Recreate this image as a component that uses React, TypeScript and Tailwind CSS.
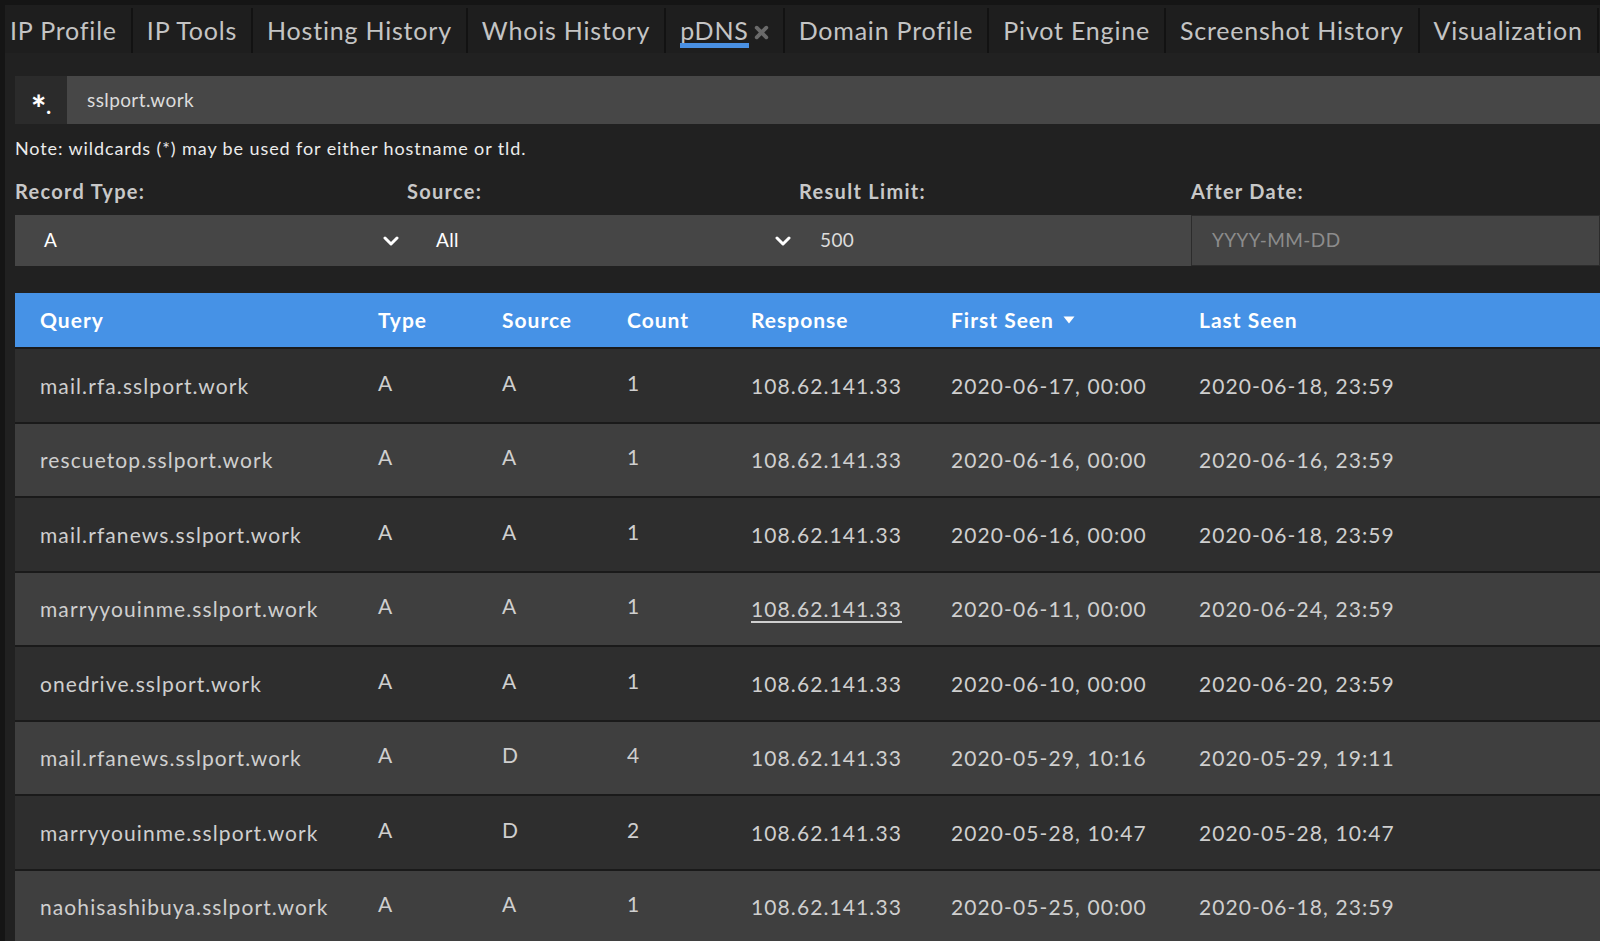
import React from "react";

const tabs = [
  "IP Profile",
  "IP Tools",
  "Hosting History",
  "Whois History",
  "pDNS",
  "Domain Profile",
  "Pivot Engine",
  "Screenshot History",
  "Visualization",
];

type Row = {
  query: string;
  type: string;
  source: string;
  count: string;
  response: string;
  first: string;
  last: string;
  link?: boolean;
};

const rows: Row[] = [
  { query: "mail.rfa.sslport.work", type: "A", source: "A", count: "1", response: "108.62.141.33", first: "2020-06-17, 00:00", last: "2020-06-18, 23:59" },
  { query: "rescuetop.sslport.work", type: "A", source: "A", count: "1", response: "108.62.141.33", first: "2020-06-16, 00:00", last: "2020-06-16, 23:59" },
  { query: "mail.rfanews.sslport.work", type: "A", source: "A", count: "1", response: "108.62.141.33", first: "2020-06-16, 00:00", last: "2020-06-18, 23:59" },
  { query: "marryyouinme.sslport.work", type: "A", source: "A", count: "1", response: "108.62.141.33", first: "2020-06-11, 00:00", last: "2020-06-24, 23:59", link: true },
  { query: "onedrive.sslport.work", type: "A", source: "A", count: "1", response: "108.62.141.33", first: "2020-06-10, 00:00", last: "2020-06-20, 23:59" },
  { query: "mail.rfanews.sslport.work", type: "A", source: "D", count: "4", response: "108.62.141.33", first: "2020-05-29, 10:16", last: "2020-05-29, 19:11" },
  { query: "marryyouinme.sslport.work", type: "A", source: "D", count: "2", response: "108.62.141.33", first: "2020-05-28, 10:47", last: "2020-05-28, 10:47" },
  { query: "naohisashibuya.sslport.work", type: "A", source: "A", count: "1", response: "108.62.141.33", first: "2020-05-25, 00:00", last: "2020-06-18, 23:59" },
];

const cols = "grid grid-cols-[338px_124px_125px_124px_200px_248px_1fr]";

function Chevron() {
  return (
    <svg width="16" height="10" viewBox="0 0 16 10" className="shrink-0">
      <polyline points="2,2 8,8 14,2" fill="none" stroke="#ffffff" strokeWidth="3" strokeLinecap="round" strokeLinejoin="round" />
    </svg>
  );
}

export default function App() {
  return (
    <div className="min-h-screen w-full overflow-hidden bg-[#151515] pl-[5px] pt-[5px] font-['Lato','Noto_Sans',sans-serif]">
      <div className="min-h-[936px] bg-[#212121]">
        {/* tab bar */}
        <nav className="flex h-[48px] items-stretch whitespace-nowrap bg-[#1e1e1e]">
          {tabs.map((t, i) => (
            <React.Fragment key={t}>
              {i > 0 && <div className="mt-[3px] w-[2px] shrink-0 bg-[#121212]" />}
              <div
                className={`flex shrink-0 items-center pt-[4px] text-[25px] tracking-[0.8px] text-[#c4c4c4] ${i === 0 ? "pl-[5px] pr-[14px]" : "px-[14px]"}`}
              >
                {t === "pDNS" ? (
                  <span className="flex items-center gap-[5px]">
                    <span className="relative">
                      pDNS
                      <span className="absolute left-0 right-0 top-[31px] h-[5px] bg-[#4a90e2]" />
                    </span>
                    <svg width="15" height="15" viewBox="0 0 14 14" className="mt-[3px]">
                      <path d="M2.5 2.5 L11.5 11.5 M11.5 2.5 L2.5 11.5" stroke="#6a6a6a" strokeWidth="3.5" strokeLinecap="round" />
                    </svg>
                  </span>
                ) : (
                  t
                )}
              </div>
            </React.Fragment>
          ))}
          <div className="mt-[3px] w-[2px] shrink-0 bg-[#121212]" />
        </nav>

        <div className="pl-[10px] pt-[23px]">
          {/* search */}
          <div className="flex h-[48px]">
            <div className="flex w-[52px] items-center justify-center bg-[#2b2b2b] text-white">
              <span className="relative top-[8px] text-[36px] font-black leading-none">*</span>
              <span className="mt-[12px] text-[20px] font-black leading-none">.</span>
            </div>
            <div className="flex flex-1 items-center bg-[#474747] pl-[20px] text-[19px] tracking-[0.4px] text-[#dcdcdc]">sslport.work</div>
          </div>

          <p className="mt-[13px] text-[18px] leading-[22px] tracking-[0.9px] text-[#ececec]">
            Note: wildcards (*) may be used for either hostname or tld.
          </p>

          {/* filters */}
          <div className="mt-[19px] grid grid-cols-[392px_392px_392px_1fr] text-[20px] font-bold leading-[26px] tracking-[1.3px] text-[#c8c8c8]">
            <div>Record Type:</div>
            <div>Source:</div>
            <div>Result Limit:</div>
            <div>After Date:</div>
          </div>
          <div className="mt-[11px] grid h-[51px] grid-cols-[392px_392px_392px_1fr] bg-[#464646]">
            <div className="flex items-center justify-between pl-[29px] pr-[8px] text-[19px] tracking-[0.4px] text-white">
              <span>A</span>
              <Chevron />
            </div>
            <div className="flex items-center justify-between pl-[29px] pr-[8px] text-[19px] tracking-[0.4px] text-white">
              <span>All</span>
              <Chevron />
            </div>
            <div className="flex items-center pl-[21px] text-[19px] tracking-[0.4px] text-[#dcdcdc]">500</div>
            <div className="flex items-center border border-[#2c2c2c] bg-[#444444] pl-[20px] text-[19px] tracking-[0.4px] text-[#8c8c8c]">
              YYYY-MM-DD
            </div>
          </div>

          {/* table */}
          <div className="mt-[27px]">
            <div className={`${cols} h-[56px] items-center border-b-2 border-[#1a1a1a] bg-[#4692e6] text-[21px] font-bold tracking-[1px] text-white`}>
              <div className="pl-[25px]">Query</div>
              <div className="pl-[25px]">Type</div>
              <div className="pl-[25px]">Source</div>
              <div className="pl-[25px]">Count</div>
              <div className="pl-[25px]">Response</div>
              <div className="flex items-center gap-[9px] pl-[25px]">
                First Seen
                <svg width="12" height="8" viewBox="0 0 12 8">
                  <path d="M0.5 0.5 H11.5 L6 7.5 Z" fill="#ffffff" />
                </svg>
              </div>
              <div className="pl-[25px]">Last Seen</div>
            </div>
            {rows.map((r, i) => (
              <div
                key={i}
                className={`${cols} h-[74.5px] items-center border-b-2 border-[#1a1a1a] text-[21px] tracking-[1.1px] text-[#cfcfcf] ${i % 2 === 0 ? "bg-[#2e2e2e]" : "bg-[#3f3f3f]"}`}
              >
                <div className="pl-[25px]">{r.query}</div>
                <div className="pb-[6px] pl-[25px]">{r.type}</div>
                <div className="pb-[6px] pl-[25px]">{r.source}</div>
                <div className="pb-[6px] pl-[25px]">{r.count}</div>
                <div className="pl-[25px]">
                  <span className={r.link ? "underline underline-offset-[4px]" : ""}>{r.response}</span>
                </div>
                <div className="pl-[25px]">{r.first}</div>
                <div className="pl-[25px]">{r.last}</div>
              </div>
            ))}
          </div>
        </div>
      </div>
    </div>
  );
}
